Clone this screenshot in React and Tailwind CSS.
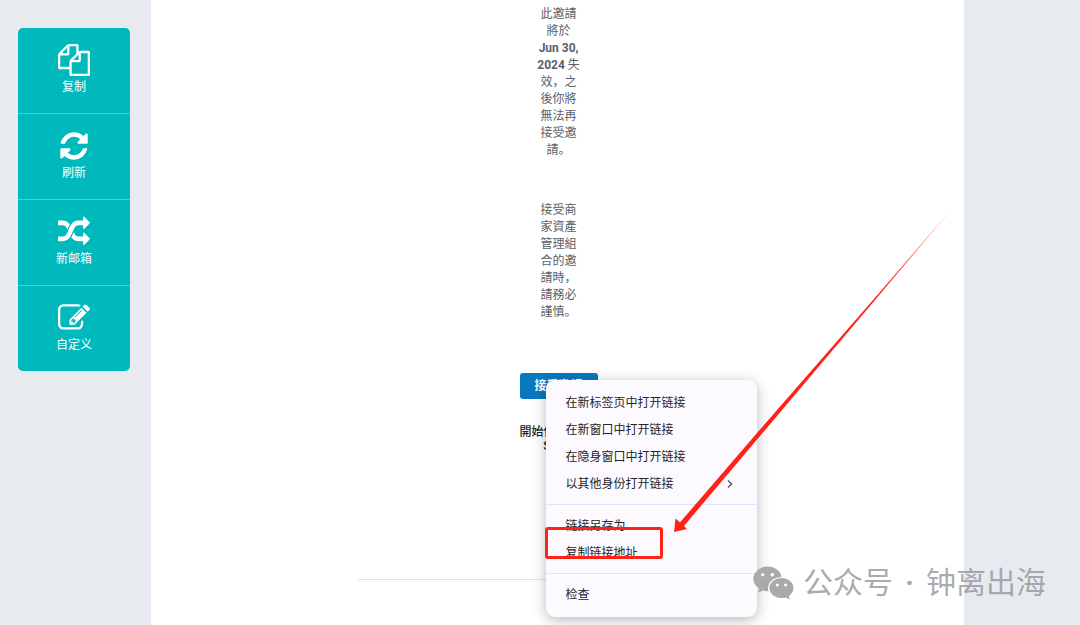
const sideActions = [
  {
    label: '复制',
    path: 'M1696 384q40 0 68 28t28 68v1216q0 40-28 68t-68 28h-960q-40 0-68-28t-28-68v-288h-544q-40 0-68-28t-28-68v-672q0-40 20-88t48-76l408-408q28-28 76-48t88-20h416q40 0 68 28t28 68v328q68-40 128-40h416zm-544 213l-299 299h299v-299zm-640-384l-299 299h299v-299zm196 647l316-316v-416h-384v416q0 40-28 68t-68 28h-416v640h512v-256q0-40 20-88t48-76zm956 804v-1152h-384v416q0 40-28 68t-68 28h-416v640h896z',
  },
  {
    label: '刷新',
    path: 'M1639 1056q0 5-1 7-64 268-268 434.5t-478 166.5q-146 0-282.5-55t-243.5-157l-129 129q-19 19-45 19t-45-19-19-45v-448q0-26 19-45t45-19h448q26 0 45 19t19 45-19 45l-137 137q71 66 161 102t187 36q134 0 250-65t186-179q11-17 53-117 8-23 30-23h192q13 0 22.5 9.5t9.5 22.5zm25-800v448q0 26-19 45t-45 19h-448q-26 0-45-19t-19-45 19-45l138-138q-148-137-349-137-134 0-250 65t-186 179q-11 17-53 117-8 23-30 23h-199q-13 0-22.5-9.5t-9.5-22.5v-7q65-268 270-434.5t480-166.5q146 0 284 55.5t245 156.5l130-129q19-19 45-19t45 19 19 45z',
  },
  {
    label: '新邮箱',
    path: 'M666 481q-60 92-137 273-22-45-37-72.5t-40.5-63.5-51-56.5-63-35-81.5-14.5h-224q-14 0-23-9t-9-23v-192q0-14 9-23t23-9h224q250 0 410 225zm1126 799q0 14-9 23l-320 320q-9 9-23 9-13 0-22.5-9.5t-9.5-22.5v-192q-32 0-85 .5t-81 1-73-1-71-5-64-10.5-63-18.5-58-28.5-59-40-55-53.5-56-69.5q59-93 136-273 22 45 37 72.5t40.5 63.5 51 56.5 63 35 81.5 14.5h256v-192q0-14 9-23t23-9q12 0 24 10l319 319q9 9 9 23zm0-896q0 14-9 23l-320 320q-9 9-23 9-13 0-22.5-9.5t-9.5-22.5v-192h-256q-48 0-87 15t-69 45-51 61.5-45 77.5q-32 62-78 171-29 66-49.5 111t-54 105-64 100-74 83-90 68.5-106.5 42-128 16.5h-224q-14 0-23-9t-9-23v-192q0-14 9-23t23-9h224q48 0 87-15t69-45 51-61.5 45-77.5q32-62 78-171 29-66 49.5-111t54-105 64-100 74-83 90-68.5 106.5-42 128-16.5h256v-192q0-14 9-23t23-9q12 0 24 10l319 319q9 9 9 23z',
  },
  {
    label: '自定义',
    path: 'M888 1184l116-116-152-152-116 116v56h96v96h56zm440-720q-16-16-33 1l-350 350q-17 17-1 33t33-1l350-350q17-17 1-33zm80 594v190q0 119-84.5 203.5t-203.5 84.5h-832q-119 0-203.5-84.5t-84.5-203.5v-832q0-119 84.5-203.5t203.5-84.5h832q63 0 117 25 15 7 18 23 3 17-9 29l-49 49q-14 14-32 8-23-6-45-6h-832q-66 0-113 47t-47 113v832q0 66 47 113t113 47h832q66 0 113-47t47-113v-126q0-13 9-22l64-64q15-15 35-7t20 29zm-96-738l288 288-672 672h-288v-288zm444 132l-92 92-288-288 92-92q28-28 68-28t68 28l152 152q28 28 28 68t-28 68z',
  },
];

const menuGroups = [
  [
    { label: '在新标签页中打开链接' },
    { label: '在新窗口中打开链接' },
    { label: '在隐身窗口中打开链接' },
    { label: '以其他身份打开链接', submenu: true },
  ],
  [{ label: '链接另存为...' }, { label: '复制链接地址' }],
  [{ label: '检查' }],
];

function SideActions() {
  return (
    <nav className="ml-[18px] mr-[21px] mt-7 divide-y divide-[#4fd0d1] overflow-hidden rounded-[5px] bg-[#00b9bd]">
      {sideActions.map((item) => (
        <button
          key={item.label}
          className="flex h-[86px] w-full flex-col items-center pt-4 text-xs leading-[18px] text-white last:h-[85px] hover:bg-[#00a9ad]"
        >
          <svg className="mb-[2px] h-8 w-8" viewBox="0 0 1792 1792" fill="currentColor" aria-hidden>
            <path d={item.path} />
          </svg>
          {item.label}
        </button>
      ))}
    </nav>
  );
}

function ContextMenu() {
  return (
    <div className="absolute left-[26px] top-[7px] z-10 w-[211px] rounded-[9px] bg-[#fcfaff] py-[2px] text-left shadow-[0_3px_14px_rgba(0,0,0,0.28)]">
      <div role="menu" className="divide-y divide-[#dbe6fd]">
        {menuGroups.map((group) => (
          <div key={group[0].label} className="py-[7px]">
            {group.map((item) => (
              <button
                key={item.label}
                role="menuitem"
                className="flex h-[27px] w-full items-center justify-between pl-5 pr-6 text-xs text-[#25252b] hover:bg-[#efedf5]"
              >
                {item.label}
                {item.submenu && (
                  <svg className="h-2 w-[6px]" viewBox="0 0 6 8" fill="none" aria-hidden>
                    <path d="M1 0.5L4.5 4L1 7.5" stroke="#55555c" strokeWidth="1.4" />
                  </svg>
                )}
              </button>
            ))}
          </div>
        ))}
      </div>
      <Annotation />
    </div>
  );
}

// red box round the "copy link address" entry, with the arrow that points at it
function Annotation() {
  return (
    <div className="pointer-events-none absolute -left-px top-[147px] h-8 w-[118px] rounded-[3px] border-3 border-[#ff2216]">
      <svg
        className="absolute -top-[328px] left-[124px] h-[336px] w-[288px]"
        viewBox="672 202 288 336"
        aria-hidden
      >
        <defs>
          <linearGradient id="tail" gradientUnits="userSpaceOnUse" x1="955" y1="206" x2="880" y2="293">
            <stop offset="0" stopColor="#ff2216" stopOpacity="0.4" />
            <stop offset="1" stopColor="#ff2216" />
          </linearGradient>
        </defs>
        <path d="M955 205L881 293L760 436L683.5 526.5L679.5 523L757 433L880 292Z" fill="url(#tail)" />
        <path d="M674 532L675.5 518.5L679 521.5L683.5 525.5L687 529Z" fill="#ff2216" />
      </svg>
    </div>
  );
}

function Watermark() {
  return (
    <div className="pointer-events-none absolute bottom-5 right-[34px] z-20 flex items-center gap-2 text-[30px] leading-[44px] text-[#8d9093]/75">
      <svg className="h-[34px] w-[42px]" viewBox="0 0 42 34" aria-hidden>
        <path
          fill="#aaaaaa"
          fillRule="evenodd"
          d="M14.5 0.5C22 0.5 27.6 5 28.6 11C21 11 15 16 15 22.5C15 23.6 15.2 24.4 15.5 25.2C13.4 25.3 11.4 25 9.7 24.5L5.2 26.8L6.2 22.6C2.6 20.3 0.3 17 0.3 13.1C0.3 6.1 6.7 0.5 14.5 0.5ZM9.7 6.9a1.8 1.8 0 1 0 0 3.6a1.8 1.8 0 1 0 0-3.6ZM19.3 6.9a1.8 1.8 0 1 0 0 3.6a1.8 1.8 0 1 0 0-3.6Z"
        />
        <path
          fill="#aaaaaa"
          fillRule="evenodd"
          d="M28.6 12C35.2 12 40.5 16.5 40.5 22C40.5 25.3 38.7 28.1 35.8 30L36.8 33.5L32.9 31.5C31.6 31.9 30.1 32.1 28.6 32.1C22 32.1 16.4 27.6 16.4 22C16.4 16.5 22 12 28.6 12ZM24.4 17.4a1.5 1.5 0 1 0 0 3a1.5 1.5 0 1 0 0-3ZM32.5 17.4a1.5 1.5 0 1 0 0 3a1.5 1.5 0 1 0 0-3Z"
        />
      </svg>
      <div className="flex gap-3">
        <span>公众号</span>
        <span className="font-bold">·</span>
        <span>钟离出海</span>
      </div>
    </div>
  );
}

export default function App() {
  return (
    <div
      lang="zh-Hans"
      className="relative flex min-h-screen overflow-hidden bg-[#e7ebef] font-[Roboto,'Noto_Sans_CJK_SC',sans-serif]"
    >
      <aside className="w-[14%] shrink-0">
        <SideActions />
      </aside>

      <main className="flex flex-1 flex-col items-center bg-white pl-[2px] pt-[6px] text-center text-xs text-[#5a6068]">
        <div className="flex w-11 flex-col gap-[43px] leading-[17px]">
          <p>
            此邀請將於 <strong>Jun 30, 2024</strong> 失效，之後你將無法再接受邀請。
          </p>
          <p>接受商家資產管理組合的邀請時，請務必謹慎。</p>
        </div>

        <div className="relative mt-[52px]">
          <a
            href="#accept"
            className="block rounded-[3px] bg-[#0a78be] px-[15px] py-1 font-bold leading-[18px] text-white"
          >
            接受邀請
          </a>
          <ContextMenu />
        </div>

        <p className="mt-[26px] w-20 font-medium leading-[14px] text-[#1c1e21]">開始使用 Meta Suite.</p>

        <hr className="mt-[126px] w-[402px] max-w-full border-[#dfe1e4]" />
      </main>

      <div className="w-[116px] shrink-0" />
      <Watermark />
    </div>
  );
}
